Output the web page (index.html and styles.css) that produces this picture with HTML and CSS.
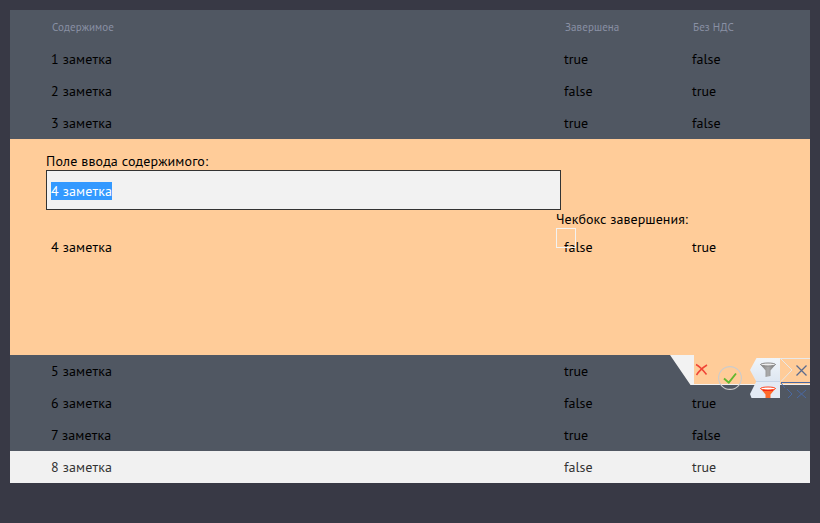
FILE: index.html
```html
<!DOCTYPE html>
<html lang="ru">
<head>
<meta charset="utf-8">
<title>Заметки</title>
<link rel="stylesheet" href="styles.css">
</head>
<body>
<main class="grid">
  <div class="row head"><span class="name">Содержимое</span><span>Завершена</span><span>Без НДС</span></div>
  <div class="row"><span class="name">1 заметка</span><span class="t">true</span><span class="f">false</span></div>
  <div class="row"><span class="name">2 заметка</span><span class="f">false</span><span class="t">true</span></div>
  <div class="row"><span class="name">3 заметка</span><span class="t">true</span><span class="f">false</span></div>
  <section class="editing">
    <div class="row"><span class="name">4 заметка</span><span class="f">false</span><span class="t">true</span></div>
    <div class="editor">
      <div class="label content-label"><span>Поле ввода содержимого:</span></div>
      <div class="field"><span class="selected">4 заметка</span></div>
      <div class="done">
        <div class="label done-label"><span>Чекбокс завершения:</span></div>
        <div class="checkbox"></div>
      </div>
    </div>
    <div class="actions">
      <svg width="140" height="43" viewBox="670 355 140 43">
        <defs>
          <linearGradient id="tag" x1="0" y1="0" x2="0" y2="1"><stop offset="0" stop-color="#f0f5fa"/><stop offset="1" stop-color="#dde6f1"/></linearGradient>
          <linearGradient id="metal"><stop offset="0" stop-color="#777"/><stop offset=".5" stop-color="#aaa"/><stop offset="1" stop-color="#777"/></linearGradient>
        </defs>
        <path d="M694 355H810V384H694Z" fill="#ffcc99"/>
        <path d="M670 355H694V384H810V385H690.5Z" fill="#f2f2f2"/>
        <path d="M696 364.5C699 366 703 370 706.5 374.5M707 365C703 367.500 699 371 696.5 375" fill="none" stroke="#f04436" stroke-width="1.5"/>
        <circle cx="730" cy="378" r="11.4" fill="none" stroke="#cccccc" stroke-width="1.1"/>
        <path d="M724 378.5L728.8 382.700L736 373.500" fill="none" stroke="#62b82e" stroke-width="1.9"/>
        <path d="M756.5 358H780V382H756.5L750 370Z" fill="url(#tag)"/>
        <path d="M780 358.5H810M781 359L792 370L781 381.5" fill="none" stroke="#e8e8e8"/>
        <path d="M756 382H780V398H751.5L750 394Z" fill="#e3eaf4"/>
        <path d="M756 381.5H780" stroke="#c7d4e6"/>
        <path d="M781 382.5H810" stroke="#4a69a2"/>
        <path d="M781 383L785 388M787 389L792 394L788 398M797 390L806 398M806 390L797 398" fill="none" stroke="#4a69a2"/>
        <path d="M796.5 365.5L806.5 375.5M806.5 365.5L796.5 375.5" stroke="#5c6c8e" stroke-width="1.3"/>
        <path d="M760 364L765.5 370.5V377L770.5 376V370.5L776 364Z" fill="url(#metal)"/>
        <ellipse cx="768" cy="364.5" rx="7.4" ry="1.5" fill="#eee" stroke="#888"/>
        <path d="M760 388L765.5 394.5V398H770.5V394.5L776 388Z" fill="#ff6b2b"/>
        <ellipse cx="768" cy="388.5" rx="7.4" ry="1.5" fill="#fff" stroke="#ff421c"/>
        <path d="M763 390.5H773" stroke="#f32818"/>
      </svg>
    </div>
  </section>
  <div class="row"><span class="name">5 заметка</span><span class="t">true</span><span></span></div>
  <div class="row"><span class="name">6 заметка</span><span class="f">false</span><span class="t">true</span></div>
  <div class="row"><span class="name">7 заметка</span><span class="t">true</span><span class="f">false</span></div>
  <div class="row hovered"><span class="name">8 заметка</span><span class="f">false</span><span class="t">true</span></div>
</main>
</body>
</html>
```
FILE: styles.css
```css
* { box-sizing: border-box; }
body {
  margin: 0;
  padding: 10px;
  background: #383945;
  color: #000;
  font: 14px/18px "PT Sans", "Noto Sans", sans-serif;
  letter-spacing: .15px;
}
.grid { width: 800px; background: #505762; }
.row {
  display: grid;
  grid-template-columns: 513px 128px 1fr;
  align-items: center;
  height: 32px;
  padding-left: 41px;
  white-space: nowrap;
}
.head {
  height: 33px;
  padding-left: 42px;
  color: #8990a4;
  font-size: 11px;
  letter-spacing: .1px;
}
.t, .f { letter-spacing: 0; }
.editing {
  position: relative;
  height: 216px;
  padding-top: 92px;
  background: #ffcc99;
}
.editor { position: absolute; top: 13px; left: 36px; }
.label { height: 18px; white-space: nowrap; }
.done-label { letter-spacing: .05px; }
.field {
  display: flex;
  align-items: center;
  width: 515px;
  height: 40px;
  padding: 2px 0 0 4px;
  border: 1px solid #333;
  background: #f2f2f2;
}
.selected { background: #3399ff; color: #fff; }
.done { width: 140px; margin-left: 510px; }
.checkbox { width: 20px; height: 20px; border: 1px solid #f2f2f2; }
.actions { position: absolute; z-index: 1; top: 216px; right: 0; }
.actions svg { display: block; }
.hovered { background: #f1f1f1; color: #333; }
```
